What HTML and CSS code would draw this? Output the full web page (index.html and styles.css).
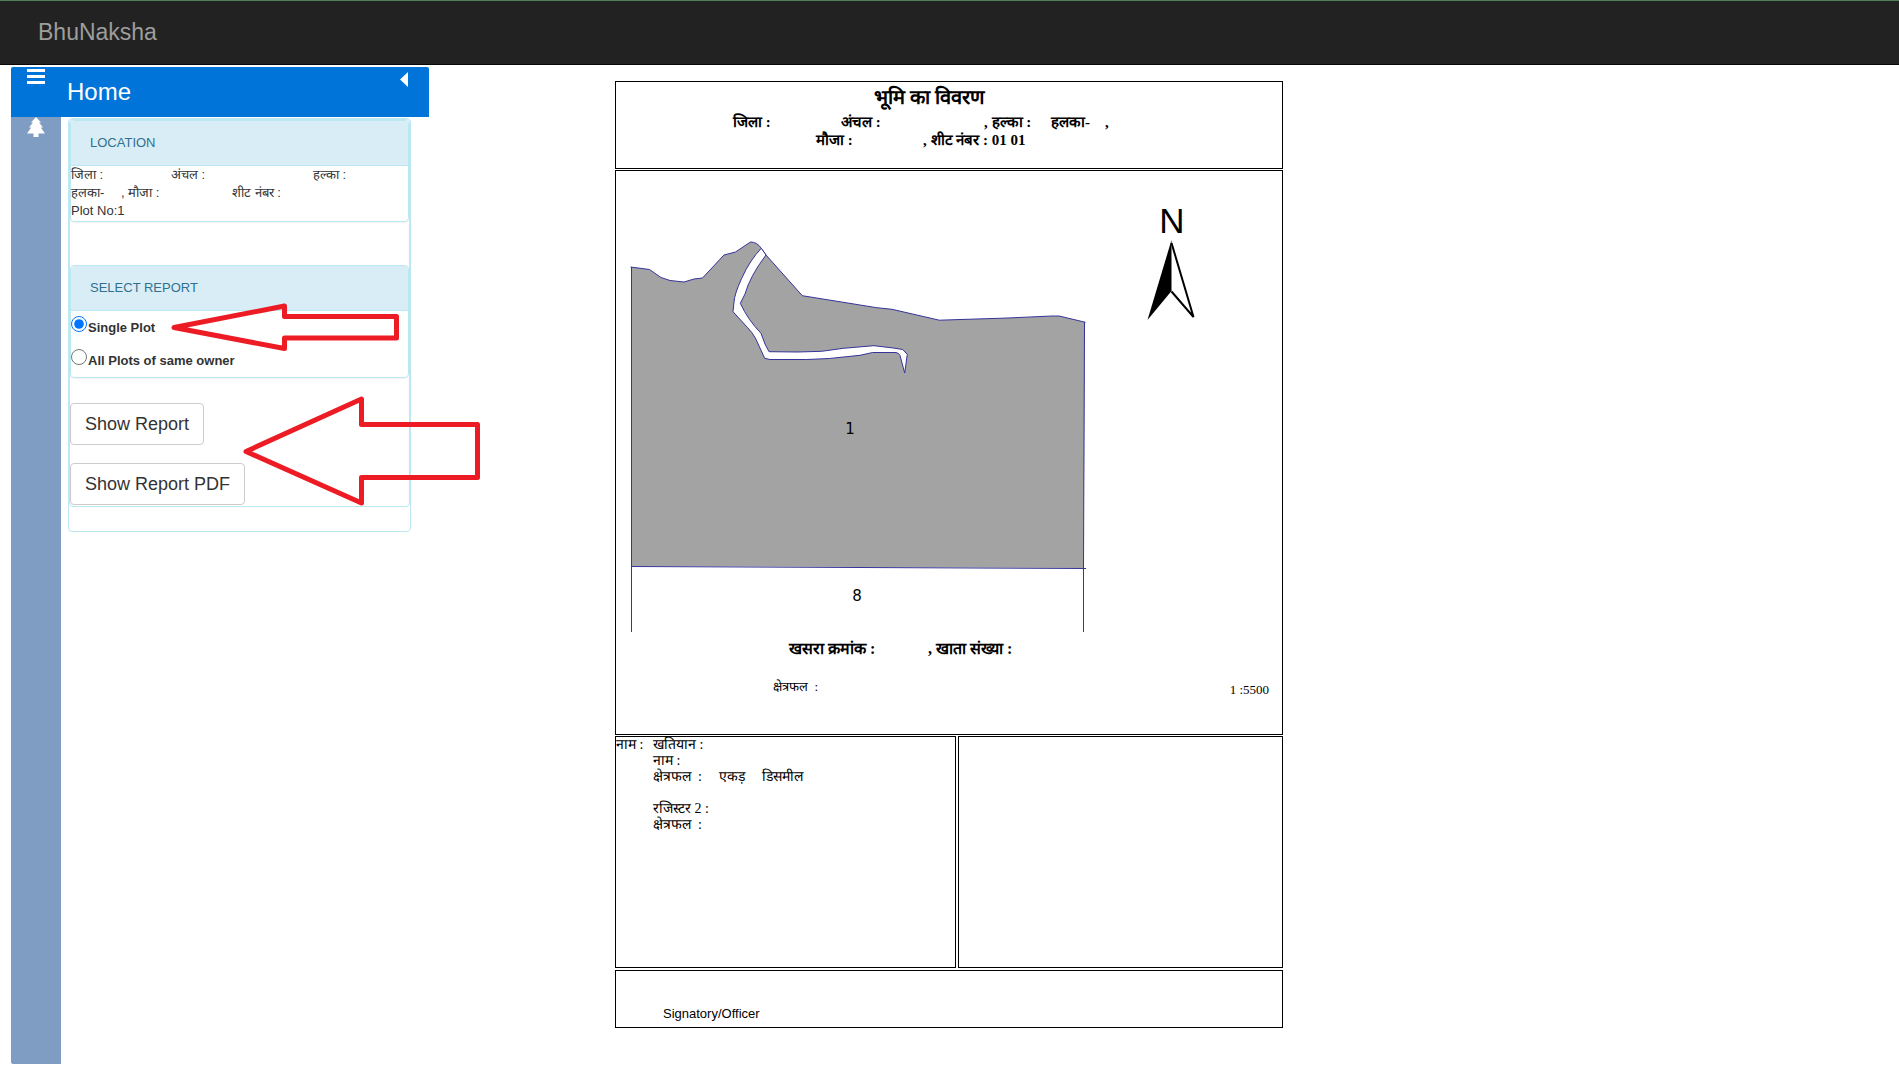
FILE: index.html
```html
<!DOCTYPE html>
<html lang="hi">
<head>
<meta charset="utf-8">
<title>BhuNaksha</title>
<link rel="stylesheet" href="styles.css">
</head>
<body>
<header class="navbar"><a class="brand" href="#">BhuNaksha</a></header>
<div class="page">
  <aside class="sidebar">
    <div class="side-head">
      <button class="icon-btn menu" aria-label="Menu"><svg width="18" height="15" viewBox="0 0 18 15"><path fill="#fff" d="M0 0h18v3H0zM0 6h18v3H0zM0 12h18v3H0z"/></svg></button>
      <h1 class="side-title">Home</h1>
      <button class="icon-btn collapse" aria-label="Collapse"><svg width="8" height="15" viewBox="0 0 8 15"><path fill="#fff" d="M8 0v15L0 7.500z"/></svg></button>
    </div>
    <div class="side-body">
      <nav class="tabs">
        <a class="tab" href="#" aria-label="Layers"><svg width="18" height="20" viewBox="0 0 18 20"><path fill="#fff" d="M9 0l5 5.500h-2l4 5h-2.200L18 16.500h-6.500V20h-5v-3.500H0l4.200-6H2l4-5H4z"/></svg></a>
      </nav>
      <div class="pane">
        <div class="outer">
          <div class="inner">
            <section class="panel location">
              <h2 class="panel-head">LOCATION</h2>
              <div class="panel-text">
                <div class="loc-row first"><span>जिला :</span><span>अंचल :</span><span>हल्का :</span></div>
                <div class="loc-row second"><span>हलका-</span><span>, मौजा :</span><span>शीट नंबर :</span></div>
                <div>Plot No:1</div>
              </div>
            </section>
            <section class="panel report">
              <h2 class="panel-head">SELECT REPORT</h2>
              <div class="choices">
                <label class="choice"><input type="radio" name="report" checked><span>Single Plot</span></label>
                <label class="choice"><input type="radio" name="report"><span>All Plots of same owner</span></label>
              </div>
            </section>
            <div class="actions">
              <button class="btn">Show Report</button>
              <button class="btn">Show Report PDF</button>
            </div>
          </div>
        </div>
      </div>
    </div>
    <svg class="arrows" width="480" height="520" viewBox="11 67 480 520" aria-hidden="true">
      <g fill="none" stroke="#ed1c24" stroke-width="5" stroke-linejoin="round">
        <path d="M174 327.500L284.500 306v10.500h112V338h-112v10.500z"/>
        <path d="M246 451.500L361.500 399v25.500h116v53h-116V503z"/>
      </g>
    </svg>
  </aside>
  <main class="document">
    <section class="box title-box">
      <h2 class="doc-title">भूमि का विवरण</h2>
      <div class="doc-row place"><span>जिला :</span><span>अंचल :</span><span>, हल्का :</span><span>हलका-</span><span>,</span></div>
      <div class="doc-row sheet"><span>मौजा :</span><span>, शीट नंबर : 01 01</span></div>
    </section>
    <section class="box map-box">
      <svg class="map" viewBox="616 171 666 461">
        <path fill="#a3a3a3" stroke="none" d="M631 267L649.500 269.500 661 277.500 670 280.500 684 282 694 279 702.500 278 724 255 735.500 252 750.500 242 Q757 242 761.300 248.300L766 255 802.300 295.700 876.700 307.700 892 309.300 939.300 320.200 1008 318 1052 316 1059 316 1085 322.300 1083.500 568 631 566z"/>
        <g fill="none" stroke="#34349a" stroke-width="1">
          <path d="M630.500 267L649.500 269.500 661 277.500 670 280.500 684 282 694 279 702.500 278 724 255 735.500 252 750.500 242 Q757 242 761.300 248.300L766 255 802.300 295.700 876.700 307.700 892 309.300 939.300 320.200 1008 318 1052 316 1059 316 1085.500 322.300"/>
          <path d="M631.500 267V632M1084.500 322L1083.500 568V632M631 566.500L1086 568.500"/>
          <path fill="#fff" d="M761.300 248.300Q750 260 741.700 278.300 734.500 294 734 302L733 311.700 747.300 327.300Q753 333 756 339.300L764.700 358.300 770 359.500H806.700L829.300 358.500 860 355.300 872.700 352.500H896Q899 353 900 355.500L904.700 373 907.300 354.300 902.700 349.500 893.300 348 874 345.700 843.300 348.300 821.700 351.300 798 352 769 351.700 765 344 761 333.300Q748 320 740.300 303.300L745 294Q750 276 766 255z"/>
        </g>
        <text class="plot" x="850" y="434">1</text>
        <text class="plot" x="857" y="601">8</text>
        <text class="north" x="1172" y="233">N</text>
        <path d="M1171.500 240L1147.500 320 1171.500 291z"/>
        <path fill="none" stroke="#000" stroke-width="2" d="M1171.500 243L1193.500 317 1171.500 291.500"/>
      </svg>
      <div class="doc-row khasra"><span>खसरा क्रमांक :</span><span>, खाता संख्या :</span></div>
      <div class="doc-row area"><span>क्षेत्रफल&nbsp; :</span><span class="scale">1 :5500</span></div>
    </section>
    <div class="split">
      <section class="box owner">
        <div>नाम :</div>
        <div>
          <div>खतियान :</div>
          <div>नाम :</div>
          <div class="units"><span>क्षेत्रफल&nbsp; :</span><span>एकड़</span><span>डिसमील</span></div>
          <div>&nbsp;</div>
          <div>रजिस्टर 2 :</div>
          <div>क्षेत्रफल&nbsp; :</div>
        </div>
      </section>
      <section class="box blank"></section>
    </div>
    <section class="box sign">Signatory/Officer</section>
  </main>
</div>
</body>
</html>
```
FILE: styles.css
```css
* { box-sizing: border-box; }
body {
  margin: 0;
  background: #fff;
  color: #333;
  font: 13px/18px "Liberation Sans", Arial, sans-serif;
}
h1, h2 { margin: 0; font-weight: 400; }
button { font-family: inherit; cursor: pointer; }
.navbar {
  display: flex;
  align-items: center;
  height: 65px;
  padding: 0 0 2px 38px;
  background: #222;
  border-top: 1px solid #4f7f57;
  border-bottom: 1px solid #080808;
}
.brand { color: #9d9d9d; font-size: 23px; line-height: 24px; text-decoration: none; }
.page {
  display: grid;
  grid-template-columns: minmax(440px, 1fr) 668px 1fr;
  align-items: start;
  padding-right: 1px;
}
.sidebar {
  position: relative;
  display: flex;
  flex-direction: column;
  width: 418px;
  min-height: calc(100vh - 77px);
  margin: 2px 0 10px 11px;
}
.side-head {
  display: flex;
  align-items: flex-start;
  height: 50px;
  background: #0074d9;
  color: #fff;
  border-radius: 2px 2px 0 0;
}
.icon-btn { display: flex; padding: 0; border: 0; background: none; }
.menu { width: 50px; padding: 2px 16px; }
.side-title { flex: 1; padding: 10px 6px; font-size: 24px; line-height: 30px; }
.collapse { padding: 5px 21px 0 0; }
.side-body { display: flex; flex: 1; }
.tabs { width: 50px; background: #7f9dc3; border-radius: 0 0 0 2px; }
.tab { display: flex; justify-content: center; }
.pane { flex: 1; padding: 1px 18px 0 7px; }
.outer, .inner, .panel { border: 1px solid #bce8f1; border-radius: 4px; }
.outer { padding-bottom: 24px; }
.panel { box-shadow: 0 1px 1px rgba(0, 0, 0, .05); }
.panel-head {
  height: 45px;
  padding: 0 19px;
  background: #d9edf7;
  border-bottom: 1px solid #bce8f1;
  color: #31708f;
  font-size: 13px;
  line-height: 44px;
}
.location { margin-bottom: 43px; padding-bottom: 1px; }
.loc-row { display: grid; white-space: nowrap; height: 18px; }
.first { grid-template-columns: 100px 142px 1fr; }
.second { grid-template-columns: 50px 111px 1fr; }
.choices { display: grid; }
.choice { display: flex; gap: 1px; height: 33px; padding-top: 5px; font-weight: 700; }
.choice input { width: 16px; height: 16px; margin: 0; }
.choice span { padding-top: 3px; }
.actions {
  display: flex;
  flex-direction: column;
  align-items: flex-start;
  gap: 18px;
  padding: 25px 0 1px;
}
.btn {
  height: 42px;
  padding: 0 14px;
  border: 1px solid #ccc;
  border-radius: 4px;
  background: #fff;
  color: #333;
  font-size: 18px;
  line-height: 24px;
}
.arrows { position: absolute; left: 0; top: 0; pointer-events: none; }

.document {
  margin-top: 16px;
  color: #000;
  font: 13px/16px "Liberation Serif", "Times New Roman", serif;
}
.box { border: 1px solid #000; }
.title-box { min-height: 88px; margin-bottom: 1px; padding-top: 3px; font-weight: 700; }
.doc-title {
  padding-right: 40px;
  font-size: 20px;
  line-height: 24px;
  font-weight: 700;
  text-align: center;
}
.doc-row { display: grid; line-height: 18px; white-space: nowrap; }
.place, .sheet { font-size: 15px; }
.place { grid-template-columns: 108px 143px 67px 54px 1fr; padding-left: 117px; padding-top: 4px; }
.sheet { grid-template-columns: 107px 1fr; padding-left: 200px; }
.map-box { min-height: 565px; margin-bottom: 1px; }
.map { display: block; width: 100%; }
.plot { font: 15px "DejaVu Sans", sans-serif; text-anchor: middle; }
.north { font: 35px "Liberation Sans", Arial, sans-serif; text-anchor: middle; }
.khasra {
  grid-template-columns: 139px 1fr;
  padding: 8px 0 0 173px;
  font-size: 16px;
  font-weight: 700;
}
.area { grid-template-columns: 1fr auto; padding: 20px 13px 0 157px; }
.scale { padding-top: 3px; }
.split { display: grid; grid-template-columns: 341px 1fr; gap: 2px; margin-bottom: 2px; }
.split .box { min-height: 232px; }
.owner { display: grid; grid-template-columns: 37px 1fr; align-items: start; font-size: 14px; }
.owner div { line-height: 16px; }
.units { display: flex; gap: 17px; }
.sign {
  min-height: 58px;
  padding: 34px 47px 0;
  font: 13px/18px "Liberation Sans", Arial, sans-serif;
}
```
